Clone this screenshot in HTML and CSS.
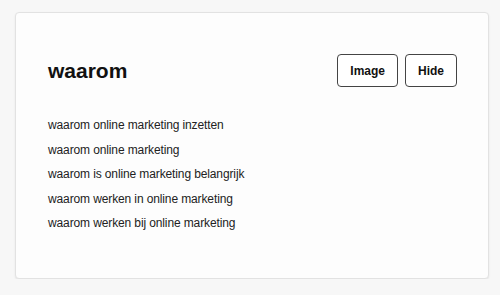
FILE: index.html
```html
<!DOCTYPE html>
<html lang="nl">
<head>
  <meta charset="UTF-8" />
  <title>waarom</title>
  <meta name="viewport" content="width=device-width, initial-scale=1.0" />
  <link rel="stylesheet" href="styles.css">
</head>
<body>

  <div class="card">
    <div class="card-header">
      <h1>waarom</h1>
      <div class="actions">
        <button class="btn">Image</button>
        <button class="btn">Hide</button>
      </div>
    </div>

    <ul class="suggestions">
      <li>waarom online marketing inzetten</li>
      <li>waarom online marketing</li>
      <li>waarom is online marketing belangrijk</li>
      <li>waarom werken in online marketing</li>
      <li>waarom werken bij online marketing</li>
    </ul>
  </div>

</body>
</html>
```

FILE: styles.css
```css
body {
  font-family: "Liberation Sans", Arial, sans-serif;
  margin: 0;
  padding: 12px 11px 0 15px;
  background: #f7f7f7;
  color: #222;
}

.card {
  background: #fdfdfd;
  border: 1px solid #e2e2e2;
  border-radius: 4px;
  box-shadow: 0 1px 2px rgba(0, 0, 0, 0.08);
  padding: 41px 31px 42px 32px;
}

.card-header {
  display: flex;
  align-items: center;
  justify-content: space-between;
}

h1 {
  margin: 0;
  font-size: 21px;
  font-weight: 700;
  color: #111;
}

.actions {
  display: flex;
  gap: 7px;
}

.btn {
  font-family: inherit;
  font-size: 12px;
  font-weight: 700;
  color: #111;
  background: #fff;
  border: 1px solid #444;
  border-radius: 4px;
  height: 33px;
  padding: 0 12px;
  cursor: pointer;
}

ul.suggestions {
  list-style: none;
  margin: 26px 0 0 0;
  padding: 0;
}

ul.suggestions li {
  font-size: 12px;
  letter-spacing: -0.12px;
  line-height: 24.5px;
  color: #222;
}
```
